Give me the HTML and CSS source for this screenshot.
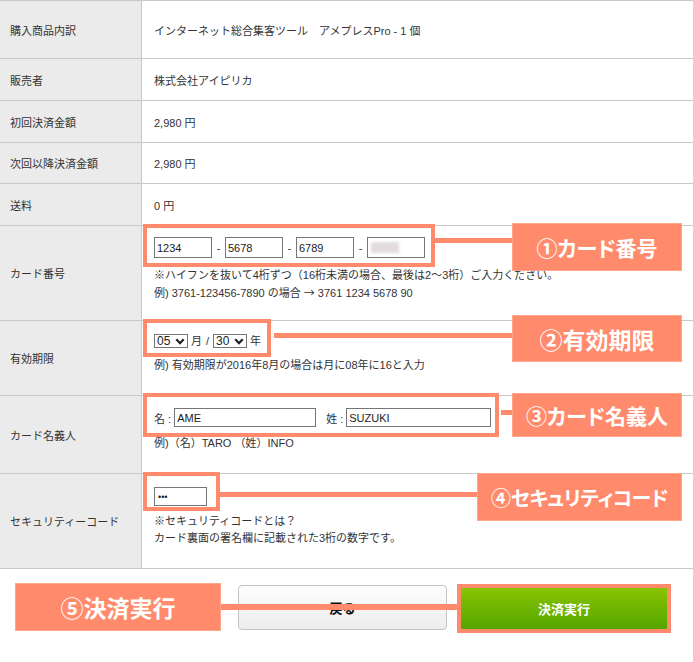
FILE: index.html
```html
<!DOCTYPE html>
<html lang="ja">
<head>
<meta charset="utf-8">
<title>決済情報の入力</title>
<link rel="stylesheet" href="styles.css">
</head>
<body>
<div class="page">
  <div class="table">
    <div class="row h58"><div class="th">購入商品内訳</div><div class="td mid">インターネット総合集客ツール　アメプレスPro - 1 個</div></div>
    <div class="row h42"><div class="th">販売者</div><div class="td mid">株式会社アイピリカ</div></div>
    <div class="row h42"><div class="th">初回決済金額</div><div class="td mid">2,980 円</div></div>
    <div class="row h41"><div class="th">次回以降決済金額</div><div class="td mid">2,980 円</div></div>
    <div class="row h42"><div class="th">送料</div><div class="td mid">0 円</div></div>
    <div class="row h95">
      <div class="th">カード番号</div>
      <div class="td">
        <div class="hl hl-card">
          <input class="field f-card" type="text" value="1234">
          <span class="dash">-</span>
          <input class="field f-card" type="text" value="5678">
          <span class="dash">-</span>
          <input class="field f-card" type="text" value="6789">
          <span class="dash">-</span>
          <div class="field f-card"><span class="blur"></span></div>
        </div>
        <p class="note n-card">※ハイフンを抜いて4桁ずつ（16桁未満の場合、最後は2～3桁）ご入力ください。<br>例) 3761-123456-7890 の場合 <span class="arrow">→</span> 3761 1234 5678 90</p>
      </div>
    </div>
    <div class="row h75">
      <div class="th">有効期限</div>
      <div class="td">
        <div class="hl hl-exp">
          <span class="sel"><span>05</span><svg class="chev" viewBox="0 0 10 7" width="10" height="7"><path d="M1.3 1.3 5 5.2 8.7 1.3" fill="none" stroke="#222" stroke-width="2.3"/></svg></span>
          <span class="unit">月</span><span class="slash">/</span>
          <span class="sel"><span>30</span><svg class="chev" viewBox="0 0 10 7" width="10" height="7"><path d="M1.3 1.3 5 5.2 8.7 1.3" fill="none" stroke="#222" stroke-width="2.3"/></svg></span>
          <span class="unit">年</span>
        </div>
        <p class="note n-exp">例) 有効期限が2016年8月の場合は月に08年に16と入力</p>
      </div>
    </div>
    <div class="row h78">
      <div class="th">カード名義人</div>
      <div class="td">
        <div class="hl hl-name">
          <span class="lbl">名 :</span>
          <input class="field f-first" type="text" value="AME">
          <span class="lbl lbl-last">姓 :</span>
          <input class="field f-last" type="text" value="SUZUKI">
        </div>
        <p class="note n-name">例)（名）TARO （姓）INFO</p>
      </div>
    </div>
    <div class="row h96 last">
      <div class="th">セキュリティーコード</div>
      <div class="td">
        <div class="hl hl-sec">
          <input class="field f-sec" type="text" value="•••">
        </div>
        <p class="note n-sec">※セキュリティコードとは？<br>カード裏面の署名欄に記載された3桁の数字です。</p>
      </div>
    </div>
  </div>

  <div class="actions">
    <button class="btn-back" type="button">戻る</button>
    <div class="go-frame"><button class="btn-go" type="button">決済実行</button></div>
  </div>

  <div class="line l1"></div>
  <div class="line l2"></div>
  <div class="line l3"></div>
  <div class="line l4"></div>
  <div class="line l5"></div>
  <div class="callout c1">①カード番号</div>
  <div class="callout c2">②有効期限</div>
  <div class="callout c3">③カード名義人</div>
  <div class="callout c4">④セキュリティコード</div>
  <div class="callout c5">⑤決済実行</div>
</div>
</body>
</html>
```
FILE: styles.css
```css
* { box-sizing: border-box; margin: 0; padding: 0; }
body {
  margin: 0;
  background: #fff;
  font-family: "Liberation Sans", "Noto Sans CJK JP", sans-serif;
  font-size: 11px;
  color: #333;
}
.page { position: relative; width: 693px; height: 662px; overflow: hidden; }

.row {
  display: grid;
  grid-template-columns: 142px 1fr;
  border-top: 1px solid #c8c8c8;
}
.row.last { border-bottom: 1px solid #c8c8c8; }
.h58 { height: 58px; }
.h42 { height: 42px; }
.h41 { height: 41px; }
.h95 { height: 95px; }
.h75 { height: 75px; }
.h78 { height: 78px; }
.h96 { height: 96px; }

.th {
  background: #ebebeb;
  border-right: 1px solid #c8c8c8;
  display: flex;
  align-items: center;
  padding-left: 10px;
  color: #333;
}
.td { padding-left: 12px; }
.td.mid { display: flex; align-items: center; }

.hl {
  display: inline-flex;
  align-items: center;
  border: 4px solid #ff8b6c;
  margin-left: -11px;
  background: #fff;
}
.hl-card { margin-top: -2px; padding: 9px 6px 5px 7px; gap: 4px; }
.hl-exp { margin-top: -2px; padding: 11px 6px 5px 7px; line-height: 14px; }
.hl-name { margin-top: -3px; padding: 11px 4px 6px 7px; }
.hl-sec { margin-top: -2px; padding: 11px 9px 1px 7px; }

.field {
  display: block;
  border: 1px solid #767676;
  background: #fff;
  font: 11px "Liberation Sans", "Noto Sans CJK JP", sans-serif;
  color: #222;
  padding: 0 2px;
  outline: none;
}
.f-card { width: 58px; height: 21px; }
.f-first { width: 142px; height: 19px; }
.f-last { width: 145px; height: 19px; }
.f-sec { width: 53px; height: 19px; font-size: 9px; padding-left: 3px; }
.blur {
  display: block;
  width: 28px;
  height: 11px;
  margin: 4px 0 0 1px;
  background: #e2dddc;
  filter: blur(1.5px);
}
.dash { display: block; width: 5px; text-align: center; }

.sel {
  display: inline-flex;
  align-items: center;
  justify-content: space-between;
  width: 34px;
  height: 14px;
  border: 1px solid #767676;
  padding: 0 2px 0 2px;
  font-size: 12px;
  color: #222;
}
.chev { display: block; }
.unit { margin-left: 3px; }
.slash { margin: 0 4px 0 4px; }

.lbl { margin-right: 3px; }
.lbl-last { margin-left: 10px; }

.note { line-height: 17px; color: #333; }
.arrow { font-family: "Noto Sans CJK JP", sans-serif; }
.n-card { margin-top: 0; }
.n-exp { margin-top: 0; }
.n-name { margin-top: -2px; }
.n-sec { margin-top: 2px; }

.actions {
  display: flex;
  align-items: flex-start;
  padding-left: 238px;
  margin-top: 16px;
}
.btn-back {
  width: 209px;
  height: 45px;
  border: 1px solid #c4c4c4;
  border-radius: 4px;
  background: linear-gradient(#fdfdfd, #ededed);
  font: bold 13px "Noto Sans CJK JP", sans-serif;
  color: #111;
}
.go-frame {
  margin-left: 10px;
  margin-top: -1px;
  border: 4px solid #ff8b6c;
  width: 214px;
  height: 49px;
}
.btn-go {
  display: block;
  width: 100%;
  height: 100%;
  border: 0;
  background: linear-gradient(#88c400, #55a600);
  font: bold 13px "Noto Sans CJK JP", sans-serif;
  color: #fff;
}

.line { position: absolute; background: #ff8b6c; }
.l1 { left: 435px; top: 238px; width: 77px; height: 5px; }
.l2 { left: 274px; top: 333px; width: 238px; height: 5px; }
.l3 { left: 501px; top: 410px; width: 11px; height: 5px; }
.l4 { left: 220px; top: 492px; width: 257px; height: 5px; }
.l5 { left: 221px; top: 604px; width: 236px; height: 6px; }

.callout {
  position: absolute;
  display: flex;
  align-items: center;
  justify-content: center;
  background: #ff8b6c;
  border: 1px solid #ffa68c;
  color: #fff;
  font-family: "Noto Sans CJK JP", sans-serif;
  font-weight: 700;
  font-size: 21px;
  font-feature-settings: "palt";
  white-space: nowrap;
}
.c1 { left: 512px; top: 223px; width: 170px; height: 48px; }
.c2 { left: 512px; top: 315px; width: 170px; height: 47px; font-size: 23px; }
.c3 { left: 512px; top: 393px; width: 170px; height: 44px; }
.c4 { left: 477px; top: 473px; width: 205px; height: 48px; font-size: 20px; letter-spacing: -0.5px; }
.c5 { left: 15px; top: 583px; width: 206px; height: 48px; font-size: 23px; }
```
